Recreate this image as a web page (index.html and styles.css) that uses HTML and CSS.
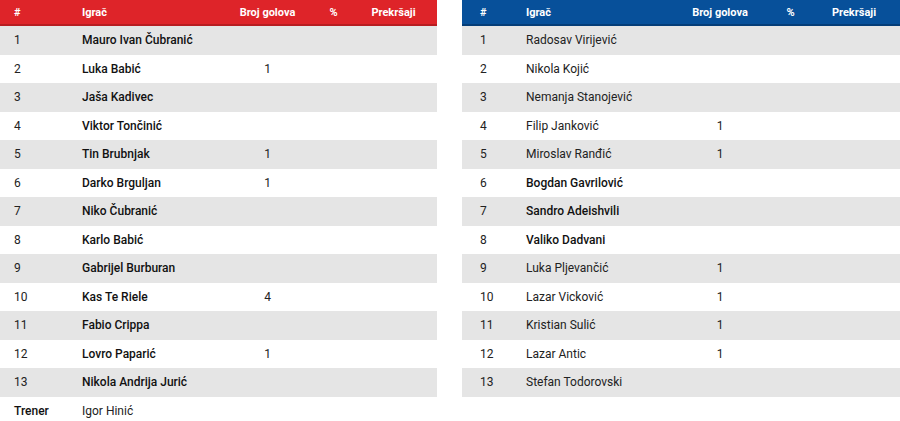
FILE: index.html
```html
<!DOCTYPE html>
<html lang="hr">
<head>
<meta charset="utf-8">
<link rel="stylesheet" href="styles.css">
</head>
<body>
<div class="wrap">
  <table class="lineup home">
    <colgroup><col class="c1"><col class="c2"><col class="c3"><col class="c4"><col class="c5"></colgroup>
    <thead>
      <tr><th class="num">#</th><th class="name">Igrač</th><th class="ctr">Broj golova</th><th class="ctr">%</th><th class="ctr">Prekršaji</th></tr>
    </thead>
    <tbody>
      <tr class="alt"><td class="num">1</td><td class="name b">Mauro Ivan Čubranić</td><td class="ctr"></td><td></td><td></td></tr>
      <tr><td class="num">2</td><td class="name b">Luka Babić</td><td class="ctr">1</td><td></td><td></td></tr>
      <tr class="alt"><td class="num">3</td><td class="name b">Jaša Kadivec</td><td class="ctr"></td><td></td><td></td></tr>
      <tr><td class="num">4</td><td class="name b">Viktor Tončinić</td><td class="ctr"></td><td></td><td></td></tr>
      <tr class="alt"><td class="num">5</td><td class="name b">Tin Brubnjak</td><td class="ctr">1</td><td></td><td></td></tr>
      <tr><td class="num">6</td><td class="name b">Darko Brguljan</td><td class="ctr">1</td><td></td><td></td></tr>
      <tr class="alt"><td class="num">7</td><td class="name b">Niko Čubranić</td><td class="ctr"></td><td></td><td></td></tr>
      <tr><td class="num">8</td><td class="name b">Karlo Babić</td><td class="ctr"></td><td></td><td></td></tr>
      <tr class="alt"><td class="num">9</td><td class="name b">Gabrijel Burburan</td><td class="ctr"></td><td></td><td></td></tr>
      <tr><td class="num">10</td><td class="name b">Kas Te Riele</td><td class="ctr">4</td><td></td><td></td></tr>
      <tr class="alt"><td class="num">11</td><td class="name b">Fabio Crippa</td><td class="ctr"></td><td></td><td></td></tr>
      <tr><td class="num">12</td><td class="name b">Lovro Paparić</td><td class="ctr">1</td><td></td><td></td></tr>
      <tr class="alt"><td class="num">13</td><td class="name b">Nikola Andrija Jurić</td><td class="ctr"></td><td></td><td></td></tr>
      <tr class="coach"><td class="num b">Trener</td><td class="name">Igor Hinić</td><td></td><td></td><td></td></tr>
    </tbody>
  </table>
  <table class="lineup away">
    <colgroup><col class="c1"><col class="c2"><col class="c3"><col class="c4"><col class="c5"></colgroup>
    <thead>
      <tr><th class="num">#</th><th class="name">Igrač</th><th class="ctr">Broj golova</th><th class="ctr">%</th><th class="ctr">Prekršaji</th></tr>
    </thead>
    <tbody>
      <tr class="alt"><td class="num">1</td><td class="name">Radosav Virijević</td><td class="ctr"></td><td></td><td></td></tr>
      <tr><td class="num">2</td><td class="name">Nikola Kojić</td><td class="ctr"></td><td></td><td></td></tr>
      <tr class="alt"><td class="num">3</td><td class="name">Nemanja Stanojević</td><td class="ctr"></td><td></td><td></td></tr>
      <tr><td class="num">4</td><td class="name">Filip Janković</td><td class="ctr">1</td><td></td><td></td></tr>
      <tr class="alt"><td class="num">5</td><td class="name">Miroslav Ranđić</td><td class="ctr">1</td><td></td><td></td></tr>
      <tr><td class="num">6</td><td class="name b">Bogdan Gavrilović</td><td class="ctr"></td><td></td><td></td></tr>
      <tr class="alt"><td class="num">7</td><td class="name b">Sandro Adeishvili</td><td class="ctr"></td><td></td><td></td></tr>
      <tr><td class="num">8</td><td class="name b">Valiko Dadvani</td><td class="ctr"></td><td></td><td></td></tr>
      <tr class="alt"><td class="num">9</td><td class="name">Luka Pljevančić</td><td class="ctr">1</td><td></td><td></td></tr>
      <tr><td class="num">10</td><td class="name">Lazar Vicković</td><td class="ctr">1</td><td></td><td></td></tr>
      <tr class="alt"><td class="num">11</td><td class="name">Kristian Sulić</td><td class="ctr">1</td><td></td><td></td></tr>
      <tr><td class="num">12</td><td class="name">Lazar Antic</td><td class="ctr">1</td><td></td><td></td></tr>
      <tr class="alt"><td class="num">13</td><td class="name">Stefan Todorovski</td><td class="ctr"></td><td></td><td></td></tr>
    </tbody>
  </table>
</div>
</body>
</html>
```

FILE: styles.css
```css
html, body {
  margin: 0;
  padding: 0;
  background: #ffffff;
}
body {
  font-family: Roboto, "Liberation Sans", Arial, sans-serif;
  color: #222222;
}
.wrap {
  display: flex;
  align-items: flex-start;
  gap: 25px;
}
.lineup {
  border-collapse: collapse;
  table-layout: fixed;
  flex: none;
}
.home { width: 437px; }
.away { width: 438px; }

.home .c1 { width: 69px; }
.home .c2 { width: 149px; }
.home .c3 { width: 99px; }
.home .c4 { width: 33px; }
.home .c5 { width: 87px; }

.away .c1 { width: 50px; }
.away .c2 { width: 155px; }
.away .c3 { width: 106px; }
.away .c4 { width: 35px; }
.away .c5 { width: 92px; }

.lineup th {
  height: 24px;
  padding: 0;
  font-size: 11px;
  font-weight: 700;
  color: #ffffff;
  text-align: left;
  vertical-align: middle;
}
.home thead tr {
  background: #de2429;
  border-bottom: 2px solid #b81c20;
}
.away thead tr {
  background: #07509a;
  border-bottom: 2px solid #043d78;
}
.lineup td {
  height: 28.5px;
  padding: 0;
  font-size: 12px;
  font-weight: 400;
  vertical-align: middle;
  white-space: nowrap;
}
.lineup tbody tr.alt {
  background: #e5e5e5;
}
.lineup .ctr { text-align: center; }
.home .num { padding-left: 14px; }
.home .name { padding-left: 13px; }
.away .num { padding-left: 18px; }
.away .name { padding-left: 14px; }
.lineup .b { font-weight: 500; color: #111111; }
```
